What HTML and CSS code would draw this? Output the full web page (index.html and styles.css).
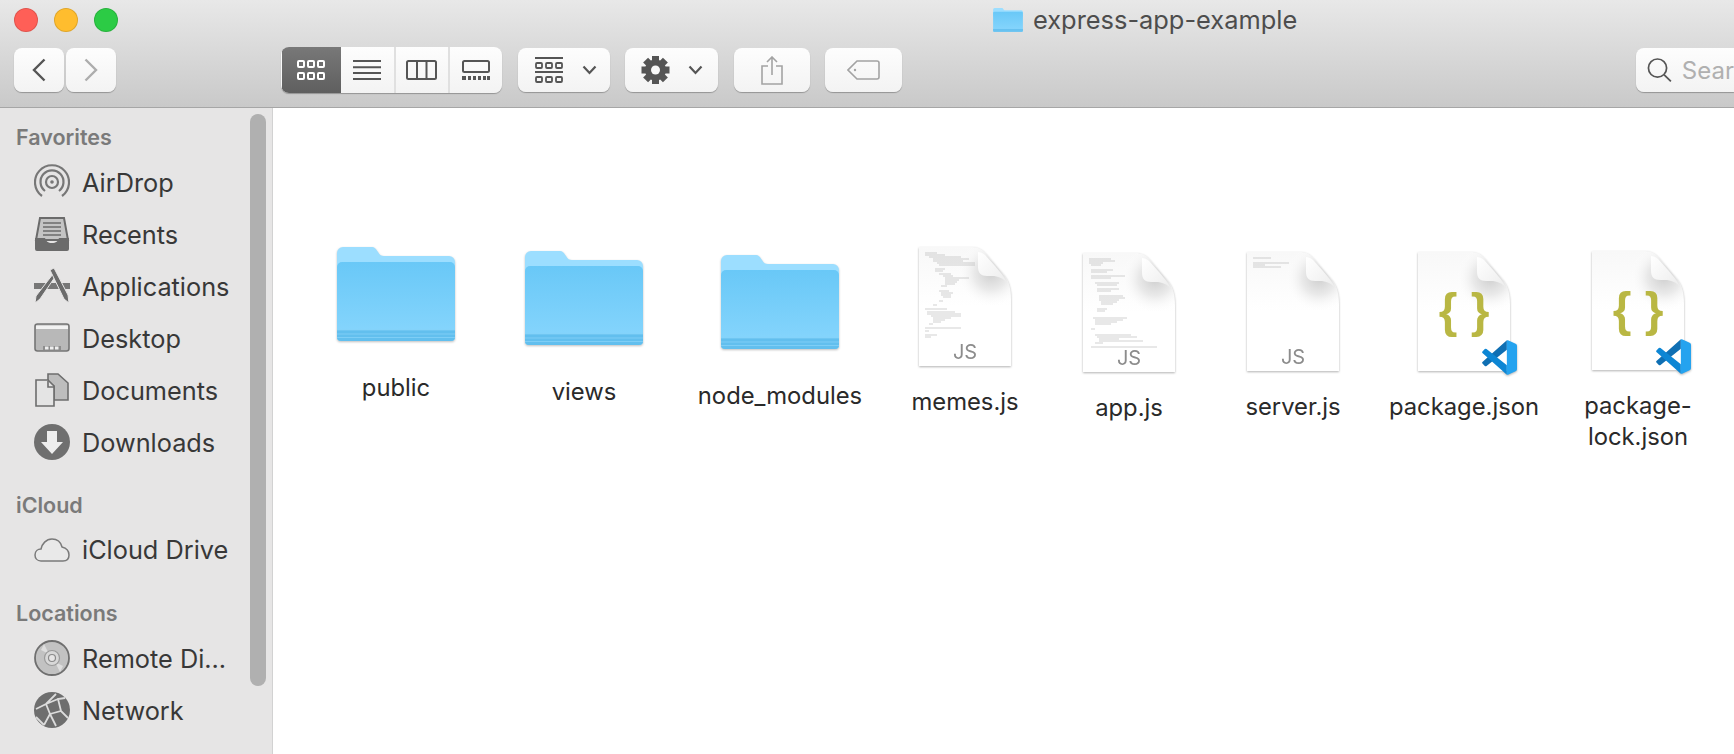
FILE: index.html
```html
<!DOCTYPE html>
<html>
<head>
  <title>express-app-example</title>
  <link rel="stylesheet" href="styles.css">
</head>
<body>
  <!-- shared icons -->
  <svg class="defs" width="0" height="0">
    <defs>
      <linearGradient id="folderFront" x1="0" y1="0" x2="0" y2="1">
        <stop offset="0" stop-color="#69c8f7"/>
        <stop offset="1" stop-color="#88d6fd"/>
      </linearGradient>
      <linearGradient id="pageShade" x1="0" y1="0" x2="0" y2="1">
        <stop offset="0" stop-color="#f8f8f8"/>
        <stop offset="0.5" stop-color="#ffffff"/>
      </linearGradient>
      <radialGradient id="foldShadow" gradientUnits="userSpaceOnUse" cx="72" cy="26" r="34">
        <stop offset="0" stop-color="#cfcfcf"/>
        <stop offset="0.5" stop-color="#eaeaea"/>
        <stop offset="1" stop-color="#ffffff" stop-opacity="0"/>
      </radialGradient>
      <linearGradient id="foldShade" x1="0" y1="0" x2="1" y2="1">
        <stop offset="0" stop-color="#ffffff"/>
        <stop offset="1" stop-color="#ececec"/>
      </linearGradient>
      <symbol id="folder" viewBox="0 0 118 95">
        <path d="M0 6a6 6 0 0 1 6-6h28c4 0 5 2 7 5s3 4 6 4h65a6 6 0 0 1 6 6v20H0z" fill="#9cdeff"/>
        <path d="M0 20a5 5 0 0 1 5-5h108a5 5 0 0 1 5 5v70a4 4 0 0 1-4 4H4a4 4 0 0 1-4-4z" fill="url(#folderFront)"/>
        <path d="M0 83h118v7a4 4 0 0 1-4 4H4a4 4 0 0 1-4-4z" fill="#62bfee"/>
        <path d="M0 83h118M0 87h118M0 90.5h118" stroke="#85d2f8" stroke-width="0.8"/>
      </symbol>
      <symbol id="page" viewBox="0 0 92 119">
        <path d="M0 0H52C60 0 64 3 68 8L85 28C90 34 92 43 92 52V119H0Z" fill="url(#pageShade)"/>
        <path d="M50 0H52C60 0 64 3 68 8L85 28C90 34 92 43 92 52V62H40V0Z" fill="url(#foldShadow)"/>
        <path d="M59 5V20C59 26 62 29 68 29H73C79 29 84 31 88 36C85 29 80 24 76 19L66 8C64 6 61 5 59 5Z" fill="url(#foldShade)"/>
      </symbol>
      <symbol id="vscode" viewBox="0 0 100 100">
        <path d="M71 1 2 62a4 4 0 0 0 0 6l6 6a4 4 0 0 0 5 0L71 28z" fill="#0f6fb3"/>
        <path d="M71 99 2 38a4 4 0 0 1 0-6l6-6a4 4 0 0 1 5 0L71 72z" fill="#0d86d4"/>
        <path d="M71 99a7 7 0 0 0 5-.5l20-9.500a6 6 0 0 0 4-5.500V16.500a6 6 0 0 0-4-5.500L76 1.500a7 7 0 0 0-5-.5z" fill="#25a3ef"/>
      </symbol>
      <symbol id="chevron" viewBox="0 0 15 10">
        <path d="M1.500 1.500 7.500 8l6-6.500" fill="none" stroke="#555" stroke-width="2.200"/>
      </symbol>
    </defs>
  </svg>

  <header class="toolbar">
    <div class="title-row">
      <div class="lights">
        <span class="light red"></span>
        <span class="light yellow"></span>
        <span class="light green"></span>
      </div>
      <div class="title">
        <svg class="title-folder"><use href="#folder"/></svg>
        <span class="title-text">express-app-example</span>
      </div>
    </div>

    <div class="tool-row">
      <div class="nav">
        <div class="btn nav-btn">
          <svg width="14" height="24" viewBox="0 0 14 24"><path d="M12.500 1.500 2 12l10.500 10.500" fill="none" stroke="#555" stroke-width="2.400"/></svg>
        </div>
        <div class="btn nav-btn">
          <svg width="14" height="24" viewBox="0 0 14 24"><path d="M1.500 1.500 12 12 1.500 22.500" fill="none" stroke="#adadad" stroke-width="2.400"/></svg>
        </div>
      </div>

      <div class="btn views">
        <div class="view selected">
          <svg width="28" height="20" viewBox="0 0 28 20" fill="none" stroke="#fff" stroke-width="2">
            <rect x="1" y="1" width="6" height="6" rx="1"/><rect x="11" y="1" width="6" height="6" rx="1"/><rect x="21" y="1" width="6" height="6" rx="1"/>
            <rect x="1" y="13" width="6" height="6" rx="1"/><rect x="11" y="13" width="6" height="6" rx="1"/><rect x="21" y="13" width="6" height="6" rx="1"/>
          </svg>
        </div>
        <div class="view">
          <svg width="28" height="20" viewBox="0 0 28 20" stroke="#555" stroke-width="2"><path d="M0 1h28M0 7.300h28M0 13h28M0 19h28"/></svg>
        </div>
        <div class="view">
          <svg width="31" height="20" viewBox="0 0 31 20" fill="none" stroke="#555" stroke-width="2"><rect x="1" y="1" width="29" height="18" rx="1.500"/><path d="M11 1v18M20.500 1v18"/></svg>
        </div>
        <div class="view">
          <svg width="28" height="20" viewBox="0 0 28 20"><rect x="1" y="1" width="26" height="11" rx="1.500" fill="none" stroke="#555" stroke-width="2"/><path d="M0 16h4v4H0zM6 16h3v4H6zM11 16h3v4h-3zM16 16h3v4h-3zM21 16h3v4h-3zM25 16h3v4h-3z" fill="#555"/></svg>
        </div>
      </div>

      <div class="btn arrange">
        <svg width="28" height="26" viewBox="0 0 28 26" fill="none" stroke="#555" stroke-width="1.800">
          <path d="M0 1h28M0 15h28"/>
          <rect x="1" y="6" width="6" height="5" rx="1"/><rect x="11" y="6" width="6" height="5" rx="1"/><rect x="21" y="6" width="6" height="5" rx="1"/>
          <rect x="1" y="20" width="6" height="5" rx="1"/><rect x="11" y="20" width="6" height="5" rx="1"/><rect x="21" y="20" width="6" height="5" rx="1"/>
        </svg>
        <svg class="chev"><use href="#chevron"/></svg>
      </div>

      <div class="btn action">
        <svg width="29" height="28" viewBox="0 0 28 28">
          <g fill="#555">
            <circle cx="14" cy="14" r="10.500"/>
            <rect x="10.500" y="0" width="7" height="28"/>
            <rect x="0" y="10.500" width="28" height="7"/>
            <rect x="10.500" y="0" width="7" height="28" transform="rotate(45 14 14)"/>
            <rect x="10.500" y="0" width="7" height="28" transform="rotate(-45 14 14)"/>
          </g>
          <circle cx="14" cy="14" r="4.500" fill="#f8f8f8"/>
        </svg>
        <svg class="chev"><use href="#chevron"/></svg>
      </div>

      <div class="btn share">
        <svg width="22" height="29" viewBox="0 0 22 29" fill="none" stroke="#a3a3a3" stroke-width="1.600">
          <path d="M7 10H1v18h20V10h-6M11 19V1M6 6l5-5 5 5"/>
        </svg>
      </div>

      <div class="btn tag">
        <svg width="33" height="20" viewBox="0 0 33 20" fill="none" stroke="#a3a3a3" stroke-width="1.600">
          <path d="M10 1h20a2 2 0 0 1 2 2v14a2 2 0 0 1-2 2H10L1 10z"/>
          <circle cx="8" cy="10" r="1.200" fill="#a3a3a3" stroke="none"/>
        </svg>
      </div>

      <div class="btn search">
        <svg width="26" height="26" viewBox="0 0 26 26" fill="none" stroke="#555" stroke-width="1.800">
          <circle cx="11" cy="11" r="9.500"/><path d="M18 18l7 7"/>
        </svg>
        <span>Sear</span>
      </div>
    </div>
  </header>

  <div class="window">
    <aside class="sidebar">
      <h4>Favorites</h4>
      <div class="row">
        <svg class="side-icon" viewBox="0 0 36 36" fill="none" stroke="#777" stroke-width="2.200">
          <path d="M8 32A17 17 0 1 1 28 32"/><path d="M11 27A11.500 11.500 0 1 1 25 27"/><circle cx="18" cy="18" r="6"/><circle cx="18" cy="18" r="1.800" fill="#777" stroke="none"/>
        </svg>
        <span>AirDrop</span>
      </div>
      <div class="row">
        <svg class="side-icon" viewBox="0 0 36 36">
          <path d="M6 2H30L34 24H2Z" fill="#c4c4c4" stroke="#6b6b6b" stroke-width="2"/>
          <path d="M9 7h18M9 11h18M9 15h18M9 19h18" stroke="#6b6b6b" stroke-width="1.500"/>
          <path d="M1 22h10c1 3 3 5 7 5s6-2 7-5h10v11a2 2 0 0 1-2 2H3a2 2 0 0 1-2-2z" fill="#6b6b6b"/>
        </svg>
        <span>Recents</span>
      </div>
      <div class="row">
        <svg class="side-icon" viewBox="0 0 36 36">
          <path d="M0 15H36V21H0Z" fill="#777"/>
          <path d="M19 6 21 9 6 31 1 35 2 28Z" fill="#6b6b6b" stroke="#e6e5e5" stroke-width="1"/>
          <path d="M16 2 20 0 34 27 35 35 30 31Z" fill="#6b6b6b" stroke="#e6e5e5" stroke-width="1"/>
        </svg>
        <span>Applications</span>
      </div>
      <div class="row">
        <svg class="side-icon" viewBox="0 0 36 36">
          <rect x="1" y="4" width="34" height="27" rx="2.500" fill="#b8b8b8" stroke="#757575" stroke-width="1.600"/>
          <path d="M2 5.500h32V9H2z" fill="#f2f2f2"/>
          <path d="M9 26h18v4H9z" fill="#8d8d8d"/>
          <path d="M11 26.500h3.500v3H11zM16 26.500h3.500v3H16zM21 26.500h3.500v3H21z" fill="#eee"/>
        </svg>
        <span>Desktop</span>
      </div>
      <div class="row">
        <svg class="side-icon" viewBox="0 0 36 36" stroke="#6d6d6d" stroke-width="1.600">
          <path d="M14 2H24L34 11V28H20V14L14 9Z" fill="#bdbdbd"/>
          <path d="M2 8H14L20 14V34H2Z" fill="#e4e4e4"/>
          <path d="M14 9v6h6" fill="none"/>
        </svg>
        <span>Documents</span>
      </div>
      <div class="row">
        <svg class="side-icon" viewBox="0 0 36 36">
          <circle cx="18" cy="18" r="18" fill="#6f6f6f"/>
          <path d="M13 7h10v11h6L18 30 7 18h6z" fill="#eeeeee"/>
        </svg>
        <span>Downloads</span>
      </div>

      <h4 class="group">iCloud</h4>
      <div class="row">
        <svg class="side-icon" viewBox="0 0 36 36">
          <path d="M7 30C3 30 1 27 1 24C1 20 4 18 7 18C8 13 12 8 18 8C24 8 27 12 28 16C32 17 35 20 35 24C35 28 33 30 29 30Z" fill="#e9e9e9" stroke="#7a7a7a" stroke-width="1.500"/>
        </svg>
        <span>iCloud Drive</span>
      </div>

      <h4 class="group locations">Locations</h4>
      <div class="row">
        <svg class="side-icon" viewBox="0 0 36 36">
          <circle cx="18" cy="18" r="17" fill="#c2c2c2" stroke="#6f6f6f" stroke-width="1.800"/>
          <path d="M10 4 15 14 7 10zM26 32 21 22 29 26z" fill="#dedede"/>
          <circle cx="18" cy="18" r="7.500" fill="#d8d8d8" stroke="#9a9a9a" stroke-width="1.200"/>
          <circle cx="18" cy="18" r="3.500" fill="#e6e5e5" stroke="#8a8a8a" stroke-width="1.200"/>
        </svg>
        <span>Remote Di...</span>
      </div>
      <div class="row">
        <svg class="side-icon" viewBox="0 0 36 36">
          <circle cx="18" cy="18" r="18" fill="#6e6e6e"/>
          <path d="M2 17 12 12 22 2M12 12 16 22 10 33M16 22 27 19 34 26M27 19 24 7 31 6M12 12 24 7M16 22 22 34M2 25l8 8" fill="none" stroke="#dcdcdc" stroke-width="1.800"/>
        </svg>
        <span>Network</span>
      </div>
      <div class="scroll-thumb"></div>
    </aside>

    <main class="files">
      <div class="item folder-item public">
        <div class="slot"><svg class="folder"><use href="#folder"/></svg></div>
        <div class="name">public</div>
      </div>
      <div class="item folder-item views-dir">
        <div class="slot"><svg class="folder"><use href="#folder"/></svg></div>
        <div class="name">views</div>
      </div>
      <div class="item folder-item node-modules">
        <div class="slot"><svg class="folder"><use href="#folder"/></svg></div>
        <div class="name">node_modules</div>
      </div>

      <div class="item memes">
        <div class="slot">
          <svg class="doc" viewBox="0 0 92 119">
            <use href="#page" width="92" height="119"/>
            <path class="code" d="M6 6h12M6 8h20M10 10h32M14 12h36M14 14h30M18 16h38M20 18h36M16 22h10M16 24h8M20 27h12M24 29h10M26 31h24M26 33h14M26 35h12M26 37h10M22 39h6M20 44h10M22 46h12M22 48h10M24 50h8M20 54h4M14 58h4M6 62h22M8 65h28M8 67h34M12 69h30M14 71h18M14 73h12M14 75h8M10 77h4M6 81h36M6 84h4M6 88h12M6 90h6"/>
            <text class="js" x="46" y="112" text-anchor="middle">JS</text>
          </svg>
        </div>
        <div class="name">memes.js</div>
      </div>

      <div class="item app">
        <div class="slot">
          <svg class="doc" viewBox="0 0 92 119">
            <use href="#page" width="92" height="119"/>
            <path class="code" d="M6 6h22M6 8h26M6 10h14M8 12h10M8 17h22M8 19h16M8 23h34M8 25h20M12 30h24M14 32h20M14 36h22M14 38h14M16 43h24M16 45h26M16 47h20M18 49h16M18 51h12M14 56h10M14 58h8M10 65h34M12 67h28M12 69h22M12 71h16M8 76h4M12 82h36M14 84h40M16 86h20M16 88h44M12 90h8M8 94h66"/>
            <text class="js" x="46" y="112" text-anchor="middle">JS</text>
          </svg>
        </div>
        <div class="name">app.js</div>
      </div>

      <div class="item server">
        <div class="slot">
          <svg class="doc" viewBox="0 0 92 119">
            <use href="#page" width="92" height="119"/>
            <path class="code" d="M6 6h18M6 11h36M6 13h12M6 15h28"/>
            <text class="js" x="46" y="112" text-anchor="middle">JS</text>
          </svg>
        </div>
        <div class="name">server.js</div>
      </div>

      <div class="item package">
        <div class="slot">
          <svg class="doc" viewBox="0 0 92 119">
            <use href="#page" width="92" height="119"/>
            <text class="braces" x="46" y="75" text-anchor="middle">{ }</text>
            <use href="#vscode" x="64" y="88" width="35" height="35"/>
          </svg>
        </div>
        <div class="name">package.json</div>
      </div>

      <div class="item package-lock">
        <div class="slot">
          <svg class="doc" viewBox="0 0 92 119">
            <use href="#page" width="92" height="119"/>
            <text class="braces" x="46" y="75" text-anchor="middle">{ }</text>
            <use href="#vscode" x="64" y="88" width="35" height="35"/>
          </svg>
        </div>
        <div class="name">package-<br>lock.json</div>
      </div>
    </main>
  </div>
</body>
</html>
```

FILE: styles.css
```css
html, body {
  margin: 0;
  height: 100%;
}

body {
  width: 1734px;
  height: 754px;
  overflow: hidden;
  display: flex;
  flex-direction: column;
  font-family: Inter, "Liberation Sans", sans-serif;
  background-color: #fff;
}

.defs {
  display: block;
  height: 0;
}

/* toolbar */
.toolbar {
  flex: none;
  height: 108px;
  box-sizing: border-box;
  padding-top: 8px;
  background: linear-gradient(#e8e8e8, #c9c9c9);
  border-bottom: 1px solid #a6a6a6;
}

.title-row {
  display: flex;
  height: 24px;
  margin-left: 14px;
  margin-bottom: 15px;
}

.lights {
  display: flex;
  gap: 16px;
}

.light {
  width: 24px;
  height: 24px;
  box-sizing: border-box;
  border-radius: 50%;
  border: 1px solid rgba(0, 0, 0, 0.12);
}

.red { background-color: #ff5f57; }
.yellow { background-color: #ffbd2e; }
.green { background-color: #2ccb45; }

.title {
  display: flex;
  align-items: center;
  gap: 10px;
  margin-left: 875px;
  color: #4d4d4d;
  font-size: 25.4px;
}

.title-text {
  margin-bottom: 2px;
}

.title-folder {
  width: 30px;
  height: 24px;
}

.tool-row {
  display: flex;
  align-items: center;
  height: 46px;
  padding-left: 14px;
}

.btn {
  flex: none;
  display: flex;
  align-items: center;
  justify-content: center;
  height: 44px;
  box-sizing: border-box;
  border-radius: 8px;
  background: linear-gradient(#fdfdfd, #f3f3f3);
  box-shadow: 0 1px 1px rgba(0, 0, 0, 0.28);
}

.nav {
  display: flex;
  flex: none;
  gap: 2px;
  margin-right: 165px;
}

.nav-btn {
  width: 50px;
}

.views {
  width: 221px;
  height: 46px;
  overflow: hidden;
  margin-right: 16px;
}

.view {
  flex: none;
  display: flex;
  align-items: center;
  justify-content: center;
  height: 100%;
  width: 54px;
  box-sizing: border-box;
  border-left: 2px solid #e0e0e0;
}

.view.selected {
  width: 59px;
  border-left: none;
  background: linear-gradient(#787878, #5f5f5f);
}

.view.selected + .view {
  width: 53px;
  border-left: none;
}

.arrange {
  width: 92px;
  gap: 19px;
  margin-right: 15px;
  padding-left: 4px;
}

.action {
  width: 93px;
  gap: 18px;
  margin-right: 16px;
}

.share {
  width: 76px;
  margin-right: 15px;
}

.tag {
  width: 77px;
  margin-right: 734px;
}

.chev {
  width: 15px;
  height: 10px;
}

/* the window is cut off at the screenshot edge, so only the start of the field shows */
.search {
  width: 98px;
  gap: 10px;
  justify-content: flex-start;
  padding-left: 11px;
  border-radius: 8px 0 0 8px;
  color: #b0b0b0;
  font-size: 24px;
}

/* sidebar and file area */
.window {
  flex: 1;
  display: flex;
  min-height: 0;
}

.sidebar {
  position: relative;
  flex: none;
  width: 273px;
  box-sizing: border-box;
  padding-top: 11px;
  background-color: #e6e5e5;
  border-right: 1px solid #d2d2d2;
}

.sidebar h4 {
  height: 36px;
  margin: 0 0 1px 16px;
  line-height: 36px;
  font-size: 21.5px;
  font-weight: 600;
  color: #7a7a7a;
}

.sidebar h4.group {
  margin-top: 19px;
  margin-bottom: 0;
}

.sidebar h4.locations {
  margin-top: 20px;
  margin-bottom: 1px;
}

.row {
  display: flex;
  align-items: center;
  gap: 12px;
  height: 52px;
  padding-left: 34px;
  font-size: 25.3px;
  color: #383838;
}

.side-icon {
  width: 36px;
  height: 36px;
}

.scroll-thumb {
  position: absolute;
  left: 250px;
  top: 6px;
  width: 16px;
  height: 572px;
  border-radius: 8px;
  background-color: #b0b0b0;
}

.files {
  position: relative;
  flex: 1;
  background-color: #fff;
}

/* icons sit wherever the user dropped them in icon view */
.item {
  position: absolute;
  width: 180px;
  display: flex;
  flex-direction: column;
  align-items: center;
  gap: 16px;
  font-size: 23.8px;
  line-height: 31px;
  color: #2a2a2a;
  text-align: center;
}

.folder-item {
  gap: 14px;
}

.slot {
  display: flex;
  align-items: center;
  justify-content: center;
  height: 128px;
}

.folder {
  width: 118px;
  height: 95px;
  filter: drop-shadow(0 1px 1px rgba(0, 0, 0, 0.25));
}

.doc {
  width: 92px;
  height: 119px;
  overflow: visible;
  filter: drop-shadow(0 1px 1px rgba(0, 0, 0, 0.3));
}

.code {
  fill: none;
  stroke: #a0a0a0;
  stroke-width: 0.5;
}

.js {
  font-size: 20px;
  fill: #8c8c8c;
}

.braces {
  font-family: "Liberation Sans", sans-serif;
  font-size: 48px;
  font-weight: bold;
  fill: #b9b743;
}

.public { left: 33px; top: 122px; }
.views-dir { left: 221px; top: 126px; }
.node-modules { left: 417px; top: 130px; }
.memes { left: 602px; top: 134px; }
.app { left: 766px; top: 140px; }
.server { left: 930px; top: 139px; }
.package { left: 1101px; top: 139px; }
.package-lock { left: 1275px; top: 138px; }
```
